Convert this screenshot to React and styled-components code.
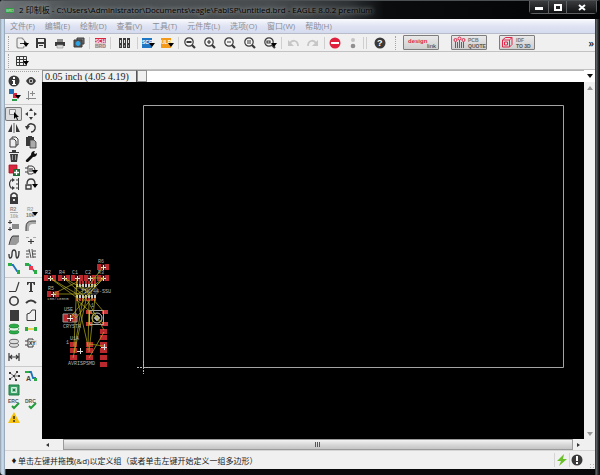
import React from 'react';
import styled, { createGlobalStyle } from 'styled-components';

const ink = '#3a3a3a';
const soft = '#8a8a8a';
const red = '#d9263f';

const caret = <path d="M8 7h6l-3 4z" fill="#000" />;

const lens = (inner) => (
  <g fill="none" stroke={ink} strokeWidth="1.2">
    <circle cx="6" cy="6" r="4.2" fill="#f4f4f4" />
    <path d="M9 9l3 3" strokeWidth="2.2" />
    {inner}
  </g>
);

const svgText = (x, y, size, fill, value) => (
  <text x={x} y={y} fontSize={size} fill={fill} fontWeight="700" fontFamily="Liberation Sans, sans-serif">
    {value}
  </text>
);

const icons = {
  add: (
    <g>
      <path d="M3 2h4l2 2M3 2Q2 2 2 4v6q0 2 2 2h4q1 0 1-2" fill="none" stroke={soft} strokeWidth="1.2" />
      <path d="M5 7h4V4l4 4H5z" fill={ink} />
      {caret}
    </g>
  ),
  save: (
    <g>
      <path d="M2 2h9l1 1v9H2z" fill={ink} />
      <path d="M4 3h6v3H4zM4 8h6v4H4z" fill="#eee" />
      <path d="M5 9.500h4" stroke={ink} />
    </g>
  ),
  print: (
    <g>
      <path d="M4 3h6v3H4z" fill={soft} />
      <path d="M2 6h10v4H2z" fill={ink} />
      <path d="M4 9h6v3H4z" fill="#ddd" stroke={soft} strokeWidth=".6" />
    </g>
  ),
  layers: (
    <g stroke={ink}>
      <path d="M5 2h7v6H5z" fill="#777" />
      <path d="M2 4h8v7H2z" fill="#555" />
      <circle cx="6" cy="7.500" r="2" fill="#2aa3e8" stroke="#2aa3e8" />
    </g>
  ),
  sch: (
    <g>
      <path d="M2 2h11v5H2z" fill={red} />
      <path d="M2 7h11v5H2z" fill="#e6c9cd" />
      {svgText(2, 7, 5, '#fff', 'SCH')}
      {svgText(2, 12, 5, '#888', 'BRD')}
    </g>
  ),
  library: (
    <g fill={ink}>
      <path d="M2 2h3v10H2zM6 2h3v10H6zM10 2h3v10h-3z" />
      <path d="M3 4h1v3H3zM7 4h1v3H7zM11 4h1v3h-1z" fill="#ddd" />
      <path d="M3 10h1M7 10h1M11 10h1" stroke="#eee" />
    </g>
  ),
  scr: (
    <g>
      <path d="M1 2h10v10H1z" fill="#1f76c4" />
      {svgText(1, 8, 5, '#fff', 'SCR')}
      {caret}
    </g>
  ),
  ulp: (
    <g>
      <path d="M1 2h10v10H1z" fill="#f49a1a" />
      {svgText(1, 8, 5, '#fff', 'ULP')}
      {caret}
    </g>
  ),
  zoomFit: lens(<path d="M3.500 6h5" strokeWidth="2" />),
  zoomIn: lens(<path d="M4 6h4M6 4v4" />),
  zoomOut: lens(<path d="M4 6h4" />),
  zoomRedraw: lens(<path d="M4 5h4M4 7h4" />),
  zoomSelect: (
    <g>
      {lens(<path d="M4 5h3v2H4z" />)}
      {caret}
    </g>
  ),
  undo: (
    <g>
      <path d="M4 7Q6 4 9 5q3 1 3 5" fill="none" stroke="#c6c6c6" strokeWidth="1.8" />
      <path d="M2 4v6h6z" fill="#c6c6c6" />
    </g>
  ),
  redo: (
    <g>
      <path d="M10 7Q8 4 5 5 2 6 2 10" fill="none" stroke="#c6c6c6" strokeWidth="1.8" />
      <path d="M12 4v6H6z" fill="#c6c6c6" />
    </g>
  ),
  stop: (
    <g>
      <circle cx="7" cy="7" r="5.500" fill="#e01f3d" />
      <path d="M3 6h8v2H3z" fill="#fff" />
    </g>
  ),
  lights: (
    <g>
      <circle cx="7" cy="4" r="2" fill="#c4c4c4" />
      <circle cx="7" cy="10" r="2.300" fill="#8f8f8f" />
    </g>
  ),
  help: (
    <g>
      <circle cx="7" cy="7" r="5.500" fill={ink} />
      {svgText(4, 10, 9, '#fff', '?')}
    </g>
  ),
  grid: (
    <g>
      <path d="M1.500 2.500h10v9h-10zM1.500 5.500h10M1.500 8.500h10M4.500 2.500v9M8.500 2.500v9" fill="none" stroke={ink} />
      {caret}
    </g>
  ),
  info: (
    <g>
      <circle cx="7" cy="7" r="5.500" fill={ink} />
      <path d="M6 3h2v2H6zM5 6h3v4h1v1H5v-1h1V7H5z" fill="#fff" />
    </g>
  ),
  eye: (
    <g>
      <path d="M2 7q5-8 10 0-5 8-10 0z" fill={ink} />
      <circle cx="7" cy="7" r="2.200" fill="#ccc" />
      <circle cx="7" cy="7" r="1.200" fill={ink} />
    </g>
  ),
  layerSet: (
    <g>
      <path d="M5 11h5v2H5z" fill="#2a9d4a" />
      <path d="M6 5h4v5H6z" fill={red} />
      <path d="M2 1h5v5H2z" fill="#2272bb" />
      {caret}
    </g>
  ),
  mark: <path d="M4.500 3v9M2 10.500h10M8.500 3v5M6 5.500h5" stroke={soft} fill="none" />,
  group: (
    <g>
      <path d="M2.500 2.500h6v5h-6z" fill="#eee" stroke={soft} />
      <path d="M7 5l5 5H10l1 3-1 0-1-3-2 2z" fill="#000" />
    </g>
  ),
  move: <path d="M7 1l2 3H5zM7 13l2-3H5zM1 7l3-2v4zM13 7l-3-2v4z" fill={ink} />,
  mirror: (
    <g fill={ink}>
      <path d="M5 3v8H1z" />
      <path d="M9 3v8h4z" />
      <path d="M7 2v10" stroke={ink} strokeWidth=".8" />
    </g>
  ),
  rotate: (
    <g>
      <path d="M3 6Q5 2 8 3q4 1 3 5-1 3-4 3" fill="none" stroke={ink} strokeWidth="1.400" />
      <path d="M1 5h5L3 9z" fill={ink} />
    </g>
  ),
  copy: (
    <g fill="#eee" stroke={ink}>
      <path d="M5 2h4l2 2v6H5z" />
      <path d="M3 4h4l2 2v6H3z" />
    </g>
  ),
  paste: (
    <g>
      <path d="M2 2h8v9H2zM4 1h4v2H4z" fill={ink} />
      <path d="M6 5h4l2 2v6H6z" fill="#aaa" stroke={ink} strokeWidth=".8" />
    </g>
  ),
  trash: (
    <g>
      <path d="M2 3h10v1H2zM5 1h4v2H5zM3 5h8l-1 8H4z" fill={ink} />
      <path d="M5.500 6v5M8.500 6v5" stroke="#999" />
    </g>
  ),
  wrench: <path d="M2 11l5-5q0-4 4-4l-1 2 1 1 2-1q0 4-4 4l-5 5q-3 0-2-2z" fill="#111" />,
  addPart: (
    <g>
      <path d="M2 2h8v8H2z" fill={red} stroke="#a31327" strokeWidth=".8" />
      <path d="M6 6h7v7H6z" fill="#1f6b35" />
      <path d="M7 9.500h5M9.500 7v5" stroke="#fff" strokeWidth="1.300" />
    </g>
  ),
  replace: (
    <g>
      <path d="M1 5h3M1 9h3M4 3h4q3 1 3 4t-3 4H4z" fill="none" stroke={ink} />
      <path d="M5 5h4v4H5z" fill={soft} />
      {caret}
    </g>
  ),
  pinSwap: (
    <g>
      <path d="M6 3H4Q1 7 4 11h2" fill="none" stroke={ink} strokeWidth="1.200" />
      <path d="M5 1l3 2-3 2zM5 9l3 2-3 2z" fill={ink} />
      <path d="M11.500 1v12M9 3h2M9 7h2M9 11h2" stroke={ink} />
    </g>
  ),
  gateSwap: (
    <g>
      <path d="M3 7Q3 2 7 2t4 5M2 8h5v4H2z" fill="none" stroke={ink} strokeWidth="1.400" />
      {caret}
    </g>
  ),
  lock: (
    <g>
      <path d="M4 6V4q3-4 6 0v2" fill="none" stroke={ink} strokeWidth="1.600" />
      <path d="M3 6h8v7H3z" fill={ink} />
      <path d="M6 8h2v2H6z" fill="#ddd" />
    </g>
  ),
  name: (
    <g>
      {svgText(3, 6, 5, '#888', 'R2')}
      {svgText(3, 13, 5, '#aaa', '10k')}
      <path d="M3 7.500h8" stroke="#aaa" />
    </g>
  ),
  value: (
    <g>
      {svgText(3, 6, 5, '#aaa', 'R2')}
      {svgText(2, 12, 5, '#777', '10k')}
      {caret}
    </g>
  ),
  smash: (
    <g fill={soft}>
      <path d="M5 5h7v5H5z" />
      <path d="M1 3.500h4M3 1v4M1 10.500h4M3 8v4" stroke={ink} />
    </g>
  ),
  miter: (
    <g>
      <path d="M2 12V8q0-6 6-6h4v3H9Q5 5 5 9v3z" fill="#aaa" />
      <path d="M2 12V8q0-6 6-6h4" fill="none" stroke={ink} />
    </g>
  ),
  split: (
    <g>
      <path d="M3 12Q3 3 6 3h6v6L9 12z" fill="#999" />
      <path d="M2 12Q4 3 6 3h6" fill="none" stroke={ink} />
    </g>
  ),
  optimize: (
    <g>
      <path d="M2 4.500h3M9 4.500h3" stroke="#aaa" />
      <path d="M4 8.500h6M7 6v5" stroke={ink} strokeWidth="1.200" />
    </g>
  ),
  meander: <path d="M2 7q0 4 1 4 2 0 2-4t2-4q2 0 2 4t1 4q2 0 2-7" fill="none" stroke={ink} strokeWidth="1.400" />,
  slice: <path d="M2 4h3M2 7h3M2 10h3M9 4h3M9 7h3M9 10h3M5 2l2 9M8 2l1 9" stroke={ink} fill="none" strokeWidth=".9" />,
  route: (
    <g>
      <path d="M3 4h3l4 6h2" fill="none" stroke="#2272bb" strokeWidth="1.800" />
      <path d="M1 2h4v3H1zM10 9h3v4h-3z" fill="#2bab45" />
    </g>
  ),
  ripup: (
    <g>
      <path d="M3 4h3l4 6h2" fill="none" stroke="#2272bb" strokeWidth="1.500" />
      <path d="M1 2h4v3H1zM10 9h3v4h-3z" fill="#2bab45" />
      <path d="M5 5h4v4H5z" fill="#ee3b50" />
    </g>
  ),
  line: <path d="M2 11.500h7M9 11l3-9" fill="none" stroke={ink} strokeWidth="1.200" />,
  text: <path d="M3 2h8v3h-1l-1-2H8v8h1v1H5v-1h1V3H5L4 5H3z" fill={ink} />,
  circle: <circle cx="7" cy="7" r="4.200" fill="none" stroke={ink} strokeWidth="1.600" />,
  arc: <path d="M2 9q5-5 10 0" fill="none" stroke={ink} strokeWidth="2" />,
  rect: <path d="M3 2h9v11H3z" fill={ink} />,
  polygon: <path d="M3 12.500V6l3-1 2-3h3.500v10.500z" fill="none" stroke={ink} />,
  via: (
    <g fill="#2bab45" stroke="#1b7d31" strokeWidth=".6">
      <ellipse cx="7" cy="10" rx="5" ry="2" />
      <ellipse cx="7" cy="7" rx="5" ry="2" fill="#e3f4e6" />
      <ellipse cx="7" cy="4" rx="5" ry="2" />
    </g>
  ),
  signal: (
    <g>
      <path d="M3 7h8" stroke="#e4c71d" strokeWidth="1.500" />
      <path d="M1 5h3v4H1zM10 5h3v4h-3z" fill="#2bab45" />
    </g>
  ),
  hole: (
    <g fill="#ddd" stroke="#666">
      <ellipse cx="7" cy="9" rx="4.500" ry="2.200" />
      <ellipse cx="7" cy="5.500" rx="4.500" ry="2.200" />
    </g>
  ),
  attribute: (
    <g>
      <path d="M1 5h3M1 9h3M4 3h5v8H4z" fill="none" stroke={ink} />
      <path d="M5 4h8v5H5z" fill="#ddd" />
      {svgText(5, 9, 5, '#222', 'XY')}
    </g>
  ),
  dimension: <path d="M2 3v8M12 3v8M3 7h8M5 5L3 7l2 2M9 5l2 2-2 2" fill="none" stroke={ink} strokeWidth="1.200" />,
  ratsnest: (
    <g>
      <path d="M7 7L3 4M7 7l3-4M7 7l5 0M7 7l2 4M7 7l-4 3" stroke={ink} strokeWidth=".7" />
      <path d="M2 3h2v2H2zM9 2h2v2H9zM11 6h2v2h-2zM8 10h2v2H8zM2 9h2v2H2zM6 6h2v2H6z" fill={ink} />
    </g>
  ),
  autoroute: (
    <g>
      <path d="M3 3h4l2 6h3" fill="none" stroke="#2272bb" strokeWidth="1.800" />
      <path d="M1 2h4v2H1zM10 9h3v3h-3z" fill="#2bab45" />
      {svgText(2, 12, 7, '#444', 'A')}
    </g>
  ),
  board: (
    <g>
      <path d="M2 2h10v10H2z" fill="#3aa066" stroke="#1e7a45" />
      <path d="M4.500 4.500h5v5h-5z" fill="#8fcca9" stroke="#cfeedd" />
      <path d="M6 6h2v2H6z" fill="#1e7a45" />
    </g>
  ),
  erc: (
    <g>
      {svgText(1, 6, 5, '#555', 'ERC')}
      <path d="M5 9l2 2 5-5" fill="none" stroke="#249b3c" strokeWidth="2" />
    </g>
  ),
  drc: (
    <g>
      {svgText(1, 6, 5, '#555', 'DRC')}
      <path d="M5 9l2 2 5-5" fill="none" stroke="#249b3c" strokeWidth="2" />
    </g>
  ),
  errors: (
    <g>
      <path d="M7 1l6 11H1z" fill="#f7c20c" />
      <path d="M6.300 5h1.400v3H6.300zM6.300 9h1.400v2H6.300z" fill="#222" />
    </g>
  ),
  bolt: <path d="M9 1L2 8h4l-2 5 8-7H8z" fill="#6abf2a" />,
  alert: (
    <g>
      <circle cx="7" cy="7" r="5.500" fill={ink} />
      <path d="M6 3h2v5H6zM6 9h2v2H6z" fill="#fff" />
    </g>
  ),
};

function Icon({ name }) {
  return (
    <IconSvg viewBox="0 0 14 14" aria-hidden="true">
      {icons[name]}
    </IconSvg>
  );
}

const menus = ['文件(F)', '编辑(E)', '绘制(D)', '查看(V)', '工具(T)', '元件库(L)', '选项(O)', '窗口(W)', '帮助(H)'];

// [icon, width], '|' is a divider
const mainTools = [
  ['add', 20], ['save', 18], ['print', 20], ['layers', 18], '|',
  ['sch', 18], '|',
  ['library', 24], '|',
  ['scr', 18], ['ulp', 20], '|',
  ['zoomFit', 20], ['zoomIn', 20], ['zoomOut', 20], ['zoomRedraw', 20], ['zoomSelect', 20], '|',
  ['undo', 20], ['redo', 20], '|',
  ['stop', 18], ['lights', 18], '|', '|',
  ['help', 24],
];

const sideTools = [
  ['info', 'eye', 'layerSet', 'mark'],
  [
    'group', 'move', 'mirror', 'rotate', 'copy', 'paste', 'trash', 'wrench', 'addPart', 'replace', 'pinSwap', 'gateSwap',
    'lock', null, 'name', 'value', 'smash', 'miter', 'split', 'optimize', 'meander', 'slice', 'route', 'ripup',
  ],
  ['line', 'text', 'circle', 'arc', 'rect', 'polygon', 'via', 'signal', 'hole', 'attribute', 'dimension', null],
  ['ratsnest', 'autoroute', 'board', null, 'erc', 'drc', 'errors', null],
];

const chips = [[61, 7, 'R6'], [8, 18, 'R2'], [22, 18, 'R4'], [35, 18, 'C1'], [48, 18, 'C2'], [61, 18, 'R3'], [11, 34, 'R5']];
const icPins = [35, 38, 41, 44, 47, 50, 53];
const headerPads = [[28, 82], [28, 88], [28, 95], [44, 82], [44, 88], [44, 95], [58, 69], [58, 75], [58, 82], [58, 88], [58, 95], [58, 102]];
const airwires = [
  'M8 18L35 34 53 24', 'M11 34L35 22', 'M22 18L44 38 61 18', 'M8 18L38 40', 'M61 7L48 24',
  'M35 18L32 86', 'M35 38L46 86', 'M41 38L32 92', 'M44 40L31 98', 'M53 38L47 92', 'M50 38L34 58 30 54',
  'M44 38L62 70', 'M38 24L62 52', 'M61 18L42 34 11 34', 'M48 18L62 18 40 40', 'M62 72L47 98', 'M47 84L62 86',
  'M35 40L62 64', 'M47 40L46 90', 'M22 18L50 34', 'M28 58L44 38',
];

function Board() {
  return (
    <BoardSvg role="img" aria-label="untitled.brd">
      <path d="M101.500 23.500h420v262h-420z" fill="none" stroke="#a4a4a4" />
      <path d="M95 285.500h13M101.500 279v13" stroke="#b8b8b8" strokeDasharray="2 1" />
      <g transform="translate(0 178)">
        {chips.map(([x, y, label]) => (
          <g key={label}>
            <path d={`M${x - 6} ${y - 3}h12v6h-12z`} fill="#b9282c" />
            <path d={`M${x - 2} ${y - 3}h4v6h-4z`} fill="#4a1518" />
            <path d={`M${x - 2} ${y + 0.5}h5M${x + 0.5} ${y - 2}v5`} stroke="#eee" />
            <BoardText x={x - 5} y={y - 4}>{label}</BoardText>
          </g>
        ))}
        {icPins.map((x) => (
          <g key={x} strokeWidth="2">
            <path d={`M${x} 21v4M${x} 37v4`} stroke="#b9282c" />
            <path d={`M${x} 24v3M${x} 35v3`} stroke="#ccc" />
          </g>
        ))}
        <path d="M33 28h22v6H33z" fill="none" stroke="#555" />
        <path d="M21 54h14v8H21z" fill="#b9282c" stroke="#999" />
        <path d="M26 54h4v8h-4z" fill="#5c1a1d" />
        <path d="M25 58.500h6M28.500 55v6" stroke="#eee" />
        <path d="M44 50h6v4h-6zM60 50h6v4h-6zM44 62h6v4h-6zM60 62h6v4h-6z" fill="#c8383b" />
        <path d="M47.500 50.500h14v14h-14z" fill="none" stroke="#aaa" />
        <circle cx="55" cy="58" r="5" fill="none" stroke="#ccc" />
        <circle cx="55" cy="58" r="2" fill="none" stroke="#ccc" />
        <path d="M52 58h6M55 55v6" stroke="#eee" />
        {headerPads.map(([x, y]) => (
          <path key={`${x}-${y}`} d={`M${x} ${y}h7v5h-7z`} fill="#b9282c" />
        ))}
        {airwires.map((d) => (
          <path key={d} d={d} fill="none" stroke="#b5ad1c" strokeWidth=".7" />
        ))}
        <path d="M35 91.500h6M38.500 88v6M59 87.500h6M62.500 84v6" stroke="#ddd" />
        <BoardText x="5" y="40" $small>100/100nm</BoardText>
        <BoardText x="39" y="33">TINY44-SSU</BoardText>
        <BoardText x="22" y="51">USE</BoardText>
        <BoardText x="21" y="68">CRYSTA</BoardText>
        <BoardText x="28" y="80">U1A</BoardText>
        <BoardText x="24" y="84">1</BoardText>
        <BoardText x="49" y="47">1</BoardText>
        <BoardText x="26" y="105">AVRISPSMD</BoardText>
      </g>
    </BoardSvg>
  );
}

export default function App() {
  return (
    <>
      <GlobalStyle />
      <Window>
        <TitleBar>
          <AppMark>BRD</AppMark>
          <Title>2 印制板 - C:\Users\Administrator\Documents\eagle\FabISP\untitled.brd - EAGLE 8.0.2 premium</Title>
          <Caption>
            <CaptionButton aria-label="Minimize">
              <svg width="8" height="7"><path d="M0 3h8v3H0z" fill="#fff" /></svg>
            </CaptionButton>
            <CaptionButton aria-label="Maximize">
              <svg width="8" height="7"><path d="M1 1h6v5H1z" fill="none" stroke="#fff" strokeWidth="2" /></svg>
            </CaptionButton>
            <CaptionButton $wide aria-label="Close">
              <svg width="8" height="7"><path d="M1 1l6 5M7 1L1 6" stroke="#fff" strokeWidth="2" /></svg>
            </CaptionButton>
          </Caption>
        </TitleBar>

        <Client>
          <MenuBar>
            {menus.map((label) => (
              <MenuItem key={label}>{label}</MenuItem>
            ))}
          </MenuBar>

          <Toolbar>
            <Grip />
            {mainTools.map((tool, i) =>
              tool === '|' ? (
                <Divider key={i} />
              ) : (
                <ToolButton key={tool[0]} $width={tool[1]} aria-label={tool[0]}>
                  <Icon name={tool[0]} />
                </ToolButton>
              )
            )}
            <Grip />
            <Partners>
              <PartnerButton aria-label="design link">
                <svg width="34" height="13">
                  <text x="4" y="7" fontSize="6" fill="#e0284a" fontWeight="700" fontFamily="Liberation Sans, sans-serif">design</text>
                  <text x="23" y="12" fontSize="6" fill="#333" fontFamily="Liberation Sans, sans-serif">link</text>
                </svg>
              </PartnerButton>
              <PartnerButton aria-label="PCB quote">
                <svg width="34" height="13">
                  <path d="M3.500 6v6M5.500 6v6M7.500 4v8M9.500 6v6M11.500 6v6" stroke="#e0284a" fill="none" />
                  <g fill="none" stroke="#e0284a">
                    <circle cx="3.500" cy="4" r="1.500" />
                    <circle cx="7.500" cy="2.500" r="1.500" />
                    <circle cx="11.500" cy="4" r="1.500" />
                  </g>
                  {svgText(16, 6, 5, '#777', 'PCB')}
                  {svgText(16, 12, 5, '#555', 'QUOTE')}
                </svg>
              </PartnerButton>
              <PartnerButton aria-label="IDF to 3D">
                <svg width="34" height="13">
                  <path d="M2.500 4l3-2.500h6.500v7l-2.500 2.500h-7zM2.500 4h7v7M9.500 4l2.500-2.500M4.500 6h3v3h-3z" stroke="#e0284a" fill="none" />
                  {svgText(16, 6, 5, '#777', 'IDF')}
                  {svgText(16, 12, 5, '#555', 'TO 3D')}
                </svg>
              </PartnerButton>
            </Partners>
            <More aria-label="more">»</More>
          </Toolbar>

          <Toolbar>
            <Grip />
            <ToolButton $width={20} aria-label="grid">
              <Icon name="grid" />
            </ToolButton>
          </Toolbar>

          <Workspace>
            <SidePanel>
              <TopGrip />
              {sideTools.map((group) => (
                <ToolGrid key={group[0]}>
                  {group.map((name, i) =>
                    name ? (
                      <SideButton key={name} $active={name === 'group'} aria-label={name}>
                        <Icon name={name} />
                      </SideButton>
                    ) : (
                      <span key={i} />
                    )
                  )}
                </ToolGrid>
              ))}
            </SidePanel>

            <Editor>
              <CommandRow>
                <Coordinates>0.05 inch (4.05 4.19)</Coordinates>
                <Spare />
                <CommandInput aria-label="command" />
                <ArrowButton aria-label="history">
                  <svg width="6" height="4"><path d="M0 0h6L3 4z" fill="#111" /></svg>
                </ArrowButton>
              </CommandRow>
              <CanvasRow>
                <Canvas>
                  <Board />
                </Canvas>
                <VScroll>
                  <ArrowButton aria-label="scroll up">
                    <svg width="6" height="4"><path d="M3 0l3 4H0z" fill="#999" /></svg>
                  </ArrowButton>
                  <ArrowButton aria-label="scroll down">
                    <svg width="6" height="4"><path d="M0 0h6L3 4z" fill="#999" /></svg>
                  </ArrowButton>
                </VScroll>
              </CanvasRow>
              <HScroll>
                <ArrowButton aria-label="scroll left">
                  <svg width="3" height="4"><path d="M3 0v4L0 2z" fill="#333" /></svg>
                </ArrowButton>
                <Thumb>
                  <svg width="6" height="5"><path d="M.5 0v5M2.500 0v5M4.500 0v5" stroke="#555" /></svg>
                </Thumb>
                <ArrowButton aria-label="scroll right">
                  <svg width="3" height="4"><path d="M0 0v4l3-2z" fill="#333" /></svg>
                </ArrowButton>
              </HScroll>
            </Editor>
          </Workspace>

          <StatusBar>
            <Bullet>♦</Bullet>
            <StatusText>单击左键并拖拽(&amp;d)以定义组（或者单击左键开始定义一组多边形）</StatusText>
            <StatusCell><Icon name="bolt" /></StatusCell>
            <StatusCell><Icon name="alert" /></StatusCell>
            <SizeGrip />
          </StatusBar>
        </Client>
      </Window>
    </>
  );
}

const GlobalStyle = createGlobalStyle`
  * {
    box-sizing: border-box;
  }

  body {
    margin: 0;
    background-color: #16181a;
    font-family: 'Open Sans', 'Noto Sans CJK SC', sans-serif;
    font-size: 8px;
    color: #1c1c1c;
  }

  button, input {
    margin: 0;
    padding: 0;
    border: 0;
    background: none;
    font: inherit;
    color: inherit;
  }

  svg {
    display: block;
  }
`;

const Window = styled.div`
  height: 100vh;
  display: flex;
  flex-direction: column;
  padding: 0 5px 6px;
  background: linear-gradient(90deg, #8d9aa5 0, #c9dcee 2px, #b9cfe6 4px, #7c8790 5px, #08090a 6px, #08090a calc(100% - 5px), #6a6d70 calc(100% - 4px), #2b2d2f calc(100% - 2px), #08090a 100%);
  border-radius: 4px;
  overflow: hidden;
`;

const TitleBar = styled.header`
  height: 19px;
  flex: none;
  display: flex;
  align-items: center;
  margin: 0 -5px;
  padding-left: 6px;
  border-top: 1px solid #4c5052;
  background: linear-gradient(90deg, #6f7578 0, #4d5255 12%, #484c4e 45%, #303335 58%, #0a0c0e 64%, #020304 100%);
`;

const AppMark = styled.span`
  width: 8px;
  height: 5px;
  background-color: #2f9e44;
  color: #d9f2de;
  font-size: 4px;
  line-height: 5px;
  text-align: center;
  overflow: hidden;
`;

const Title = styled.h1`
  flex: 1;
  min-width: 0;
  margin: 0 0 0 5px;
  font-size: 8px;
  line-height: 16px;
  font-weight: 400;
  color: #000;
  white-space: nowrap;
  text-shadow: 0 0 4px #a9adaf, 0 0 6px #8c9092;
`;

const Caption = styled.div`
  display: flex;
  align-self: flex-start;
  height: 13px;
  margin-right: 3px;
  border: 1px solid #5e6163;
  border-top: 0;
  border-radius: 0 0 4px 4px;
`;

const CaptionButton = styled.button`
  width: ${(props) => (props.$wide ? 30 : 18)}px;
  display: flex;
  align-items: center;
  justify-content: center;
  background: linear-gradient(#3a3c3e, #101112);

  & + & {
    border-left: 1px solid #5e6163;
  }
`;

const Client = styled.main`
  flex: 1;
  min-height: 0;
  display: flex;
  flex-direction: column;
  background-color: #f0f0f0;
`;

const MenuBar = styled.nav`
  height: 15px;
  flex: none;
  display: flex;
  align-items: center;
  gap: 10px;
  padding-left: 5px;
  background: linear-gradient(#fafbfd, #dfe3f3 50%, #d5dbef);
  border-bottom: 1px solid #b8bccb;
`;

const MenuItem = styled.button`
  line-height: 12px;
  color: #8b8d94;
  white-space: nowrap;
`;

const Toolbar = styled.div`
  height: 18px;
  flex: none;
  display: flex;
  align-items: center;
  border-bottom: 1px solid #c2c2c4;
`;

const Grip = styled.span`
  width: 1px;
  height: 14px;
  margin: 0 3px;
  border-left: 1px dotted #a5a5a5;
`;

const Divider = styled.span`
  width: 1px;
  height: 12px;
  margin: 0 1px;
  background-color: #cfcfcf;
`;

const ToolButton = styled.button`
  width: ${(props) => props.$width}px;
  height: 16px;
  flex: none;
  display: flex;
  align-items: center;
  justify-content: center;
`;

const IconSvg = styled.svg`
  width: 14px;
  height: 14px;
`;

const Partners = styled.div`
  display: flex;
  gap: 12px;
  margin-left: 4px;
`;

const PartnerButton = styled.button`
  width: 36px;
  height: 15px;
  background: linear-gradient(#e9e9e9, #cfcfcf);
  border: 1px solid #7d7d7d;
  border-radius: 1px;
`;

const More = styled.button`
  margin-left: auto;
  padding-right: 1px;
  font-size: 10px;
  line-height: 12px;
  font-weight: 600;
`;

const Workspace = styled.div`
  flex: 1;
  min-height: 0;
  display: flex;
`;

const SidePanel = styled.aside`
  width: 37px;
  flex: none;
  padding-top: 1px;
`;

const TopGrip = styled.div`
  height: 3px;
  margin: 0 3px;
  border-top: 1px dotted #a5a5a5;
`;

const ToolGrid = styled.div`
  display: grid;
  grid-template-columns: 17px 18px;
  grid-auto-rows: 14px;

  & + & {
    margin-top: 2px;
    padding-top: 2px;
    border-top: 1px solid #cacaca;
  }
`;

const SideButton = styled.button`
  display: flex;
  align-items: center;
  justify-content: center;
  border-radius: 2px;
  background-color: ${(props) => (props.$active ? '#dcdcdc' : 'transparent')};
  box-shadow: ${(props) => (props.$active ? 'inset 0 0 0 1px #777' : 'none')};
`;

const Editor = styled.section`
  flex: 1;
  min-width: 0;
  display: flex;
  flex-direction: column;
`;

const CommandRow = styled.div`
  height: 12px;
  flex: none;
  display: flex;
  background-color: #fff;
`;

const Coordinates = styled.output`
  width: 95px;
  padding-left: 2px;
  background-color: #f0f0f0;
  border: 1px solid #8f8f8f;
  border-right-color: #555;
  border-bottom: 0;
  font-family: 'Liberation Serif', serif;
  font-size: 10px;
  line-height: 11px;
  white-space: nowrap;
`;

const Spare = styled.span`
  width: 10px;
  background-color: #f0f0f0;
  border: 1px solid #8f8f8f;
`;

const CommandInput = styled.input`
  flex: 1;
  min-width: 0;
  border-top: 1px solid #b5b5b5;
  font-size: 8px;
  outline: none;
`;

const ArrowButton = styled.button`
  width: 11px;
  height: 11px;
  flex: none;
  display: flex;
  align-items: center;
  justify-content: center;
`;

const CanvasRow = styled.div`
  flex: 1;
  min-height: 0;
  display: flex;
`;

const Canvas = styled.div`
  flex: 1;
  min-width: 0;
  background-color: #000;
`;

const BoardSvg = styled.svg`
  width: 100%;
  height: 100%;
`;

const BoardText = styled.text`
  font-family: 'Liberation Mono', monospace;
  font-size: ${(props) => (props.$small ? 4 : 5)}px;
  fill: #b5b5b5;
`;

const VScroll = styled.div`
  width: 11px;
  display: flex;
  flex-direction: column;
  justify-content: space-between;
`;

const HScroll = styled.div`
  height: 11px;
  flex: none;
  display: flex;
  padding-right: 11px;
  background-color: #f0f0f0;
`;

const Thumb = styled.div`
  flex: 1;
  display: flex;
  align-items: center;
  justify-content: center;
  margin-left: 10px;
  border: 1px solid #9a9a9a;
  background: linear-gradient(#f2f2f2, #d9d9d9 50%, #c4c4c4);
`;

const StatusBar = styled.footer`
  height: 19px;
  flex: none;
  display: flex;
  align-items: center;
  padding-left: 6px;
  border-top: 1px solid #d5d5d5;
`;

const Bullet = styled.span`
  width: 7px;
  font-size: 6px;
`;

const StatusText = styled.span`
  flex: 1;
  min-width: 0;
  white-space: nowrap;
`;

const StatusCell = styled.span`
  border-left: 1px solid #d5d5d5;
`;

const SizeGrip = styled.span`
  width: 6px;
  height: 6px;
  align-self: flex-end;
  margin-left: 5px;
  background: radial-gradient(circle, #b5b5b5 1px, transparent 1px) 0 0 / 3px 3px;
`;
